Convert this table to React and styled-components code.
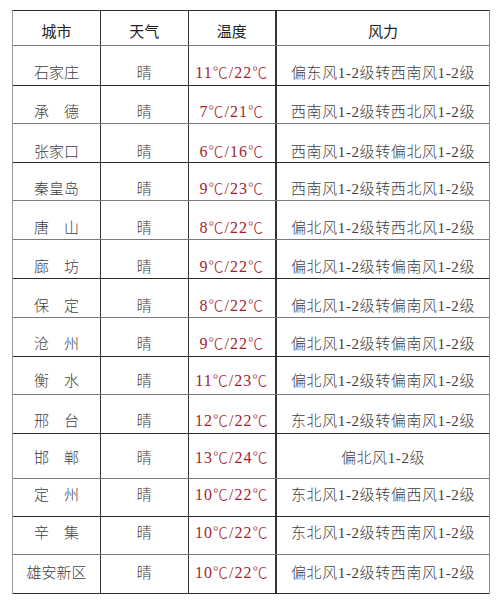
import React from "react";
import styled, { createGlobalStyle } from "styled-components";

const GlobalStyle = createGlobalStyle`
  html, body { margin: 0; padding: 0; background: #ffffff; }
  body { font-family: "Liberation Serif", "Noto Sans CJK SC", serif; }
`;

const Page = styled.div`
  width: 500px;
  height: 610px;
  padding: 10px 0 0 12px;
  box-sizing: border-box;
  background: #fff;
`;

const Table = styled.div`
  width: 478px;
  border-top: 1px solid #2e2e2e;
  border-left: 1px solid #9a9a9a;
  border-right: 1px solid #8a8a8a;
  box-sizing: border-box;
`;

const Row = styled.div`
  display: grid;
  grid-template-columns: 87px 87.5px 87.5px 1fr;
  height: ${(p) => p.$h}px;
  box-sizing: border-box;
  border-bottom: 1px solid ${(p) => (p.$dark ? "#2a2a2a" : "#7a7a7a")};
`;

const Cell = styled.div`
  display: flex;
  align-items: center;
  justify-content: center;
  box-sizing: border-box;
  border-left: ${(p) => (p.$first ? "none" : `${p.$thick ? 2 : 1}px solid #333`)};
  font-size: ${(p) => (p.$red ? 16 : 15)}px;
  font-weight: 300;
  color: ${(p) => (p.$red ? "#a51d2d" : "#404040")};
  letter-spacing: ${(p) => (p.$wide ? "0.6px" : p.$red ? "1px" : "0")};
  white-space: nowrap;
`;

const Label = styled.span`
  display: inline-block;
  transform: translateY(${(p) => p.$dy}px);
`;

const Deg = styled.span`
  font-family: "Noto Sans CJK SC", sans-serif;
  font-weight: 300;
  font-size: 15px;
`;

const HeadLabel = styled.span`
  display: inline-block;
  color: #222;
  font-weight: 400;
  transform: translateY(2px);
`;

const rows = [
  ["石家庄", "11℃/22℃", "偏东风1-2级转西南风1-2级", 40, 6, true],
  ["承　德", "7℃/21℃", "西南风1-2级转西北风1-2级", 38, 6, false],
  ["张家口", "6℃/16℃", "西南风1-2级转偏北风1-2级", 39, 6.5, true],
  ["秦皇岛", "9℃/23℃", "西南风1-2级转西北风1-2级", 38, 6, false],
  ["唐　山", "8℃/22℃", "偏北风1-2级转西北风1-2级", 39, 5.5, false],
  ["廊　坊", "9℃/22℃", "偏北风1-2级转偏南风1-2级", 39, 5.5, true],
  ["保　定", "8℃/22℃", "偏北风1-2级转偏南风1-2级", 39, 5.5, false],
  ["沧　州", "9℃/22℃", "偏北风1-2级转偏南风1-2级", 39, 4.5, true],
  ["衡　水", "11℃/23℃", "偏北风1-2级转偏南风1-2级", 38, 4, false],
  ["邢　台", "12℃/22℃", "东北风1-2级转偏南风1-2级", 39, 4.5, true],
  ["邯　郸", "13℃/24℃", "偏北风1-2级", 45, 0, false],
  ["定　州", "10℃/22℃", "东北风1-2级转偏西风1-2级", 38, -4, true],
  ["辛　集", "10℃/22℃", "东北风1-2级转西南风1-2级", 38, -4, false],
  ["雄安新区", "10℃/22℃", "偏北风1-2级转西南风1-2级", 39, -3.5, true],
];

function Temp({ value }) {
  const parts = value.split("℃");
  return (
    <>
      {parts.map((p, i) => (
        <React.Fragment key={i}>
          {p}
          {i < parts.length - 1 && <Deg>℃</Deg>}
        </React.Fragment>
      ))}
    </>
  );
}

export default function App() {
  return (
    <>
      <GlobalStyle />
      <Page>
        <Table>
          <Row $h={35}>
            <Cell $first><HeadLabel>城市</HeadLabel></Cell>
            <Cell><HeadLabel>天气</HeadLabel></Cell>
            <Cell><HeadLabel>温度</HeadLabel></Cell>
            <Cell $thick><HeadLabel>风力</HeadLabel></Cell>
          </Row>
          {rows.map(([city, temp, wind, h, dy, dark]) => (
            <Row key={city} $h={h} $dark={dark}>
              <Cell $first><Label $dy={dy}>{city}</Label></Cell>
              <Cell><Label $dy={dy}>晴</Label></Cell>
              <Cell $red><Label $dy={dy}><Temp value={temp} /></Label></Cell>
              <Cell $thick $wide><Label $dy={dy}>{wind}</Label></Cell>
            </Row>
          ))}
        </Table>
      </Page>
    </>
  );
}
